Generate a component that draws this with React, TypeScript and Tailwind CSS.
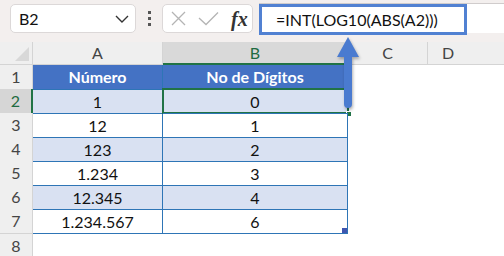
import React from "react";

const rows = [
  { a: "1", b: "0" },
  { a: "12", b: "1" },
  { a: "123", b: "2" },
  { a: "1.234", b: "3" },
  { a: "12.345", b: "4" },
  { a: "1.234.567", b: "6" },
];

const font = { fontFamily: "Lato, 'Liberation Sans', sans-serif" };

function Chevron() {
  return (
    <svg width="14" height="8" viewBox="0 0 14 8" className="text-[#333]">
      <path d="M1 1 L7 7 L13 1" fill="none" stroke="currentColor" strokeWidth="1.4" />
    </svg>
  );
}

export default function App() {
  return (
    <div className="relative w-[504px] h-[256px] overflow-hidden bg-white text-[#111]" style={font}>
      {/* formula bar */}
      <div className="flex items-start h-[42px] bg-[#f3efee] pt-[4px]">
        <div className="ml-[10px] w-[126px] h-[29px] bg-white border border-[#dcd8d8] rounded-[5px] flex items-center justify-between pl-[8px] pr-[6px]">
          <span className="text-[16px]">B2</span>
          <Chevron />
        </div>
        <div className="w-[26px] h-[29px] flex flex-col items-center justify-center gap-[3px]">
          <span className="w-[3px] h-[3px] bg-[#555]" />
          <span className="w-[3px] h-[3px] bg-[#555]" />
          <span className="w-[3px] h-[3px] bg-[#555]" />
        </div>
        <div className="w-[91px] h-[29px] bg-white border border-[#dcd8d8] rounded-[5px] flex items-center pl-[8px] gap-[12px]">
          <svg width="15" height="15" viewBox="0 0 15 15">
            <path d="M1 1 L14 14 M14 1 L1 14" stroke="#b4b4b4" strokeWidth="1.3" />
          </svg>
          <svg width="21" height="15" viewBox="0 0 21 15">
            <path d="M1 7 L8 13.5 L20 1.5" fill="none" stroke="#b4b4b4" strokeWidth="1.3" />
          </svg>
          <span className="text-[20px] italic font-bold leading-none text-[#333]" style={{ fontFamily: "'Liberation Serif', serif" }}>
            fx
          </span>
        </div>
        <div className="ml-[6px] flex-1 h-[30px] bg-white border-t border-[#d0cccc] relative -mt-[1px]">
          <div className="absolute left-0 top-0 w-[208px] h-[31px] border-[3px] border-[#5181d2] flex items-center pl-[14px] text-[16px] text-[#111]">
            =INT(LOG10(ABS(A2)))
          </div>
        </div>
      </div>

      {/* grid */}
      <div className="grid grid-cols-[33px_130px_185px_80px_1fr] text-[16px]">
        {/* column headers */}
        <div className="h-[23px] bg-[#efefef] border-r border-b border-[#d4d4d4] relative">
          <svg width="14" height="14" viewBox="0 0 14 14" className="absolute right-[3px] bottom-[3px]">
            <path d="M14 0 L14 14 L0 14 Z" fill="#d8d8d8" />
          </svg>
        </div>
        <div className="h-[23px] bg-[#efefef] border-r border-b border-[#d4d4d4] flex items-center justify-center text-[#444]">A</div>
        <div className="h-[23px] bg-[#d9d9d9] border-r border-[#c4c4c4] border-b-2 border-b-[#217346] flex items-center justify-center text-[#1f6b41]">B</div>
        <div className="h-[23px] bg-[#efefef] border-r border-b border-[#d4d4d4] flex items-center justify-center text-[#444]">C</div>
        <div className="h-[23px] bg-[#efefef] border-b border-[#d4d4d4] flex items-center justify-center text-[#444] pr-[36px]">D</div>

        {/* row 1: table header */}
        <div className="h-[24px] bg-[#efefef] border-r border-[#d4d4d4] flex items-center justify-center text-[#444]">1</div>
        <div className="h-[24px] bg-[#4472c4] border-r border-[#2e75b6] flex items-center justify-center text-white font-bold">Número</div>
        <div className="h-[24px] bg-[#4472c4] border-r border-[#2e75b6] flex items-center justify-center text-white font-bold">No de Dígitos</div>
        <div className="h-[24px]" />
        <div className="h-[24px]" />

        {rows.map((r, i) => {
          const n = i + 2;
          const band = i % 2 === 0 ? "bg-[#d9e1f2]" : "bg-white";
          const sel = n === 2;
          return (
            <React.Fragment key={n}>
              <div
                className={
                  sel
                    ? "h-[24px] bg-[#d6d6d6] border-r-2 border-[#217346] flex items-center justify-center text-[#1f6b41]"
                    : "h-[24px] bg-[#efefef] border-r border-[#d4d4d4] flex items-center justify-center text-[#444]"
                }
              >
                {n}
              </div>
              <div className={`h-[24px] ${band} border-t border-r border-[#2e75b6] flex items-center justify-center`}>{r.a}</div>
              <div className={`h-[24px] ${band} border-t border-r border-[#2e75b6] flex items-center justify-center relative`}>
                {r.b}
                {sel && (
                  <>
                    <div className="absolute -left-[1px] -top-[2px] right-[-2px] bottom-[-1px] border-2 border-[#217346]" />
                    <div className="absolute -right-[5px] -bottom-[4px] w-[6px] h-[6px] bg-[#217346] border border-white" />
                  </>
                )}
                {n === 7 && <div className="absolute right-0 bottom-0 w-[5px] h-[5px] bg-[#3f56b0]" />}
              </div>
              <div className="h-[24px]" />
              <div className="h-[24px]" />
            </React.Fragment>
          );
        })}
        {/* row 8 */}
        <div className="h-[24px] bg-[#efefef] border-r border-t border-[#d4d4d4] flex items-center justify-center text-[#444]">8</div>
        <div className="h-[24px] border-t border-[#2e75b6] col-span-2" />
        <div className="h-[24px]" />
        <div className="h-[24px]" />
      </div>

      {/* arrow overlay */}
      <svg width="30" height="80" viewBox="0 0 30 80" className="absolute left-[333px] top-[34px]" style={{ filter: "drop-shadow(1px 2px 1.5px rgba(0,0,0,0.3))" }}>
        <path d="M15 3 L26 23 L19 23 L19 70 Q19 74 15 74 Q11 74 11 70 L11 23 L4 23 Z" fill="#4a7bd0" />
      </svg>
    </div>
  );
}
